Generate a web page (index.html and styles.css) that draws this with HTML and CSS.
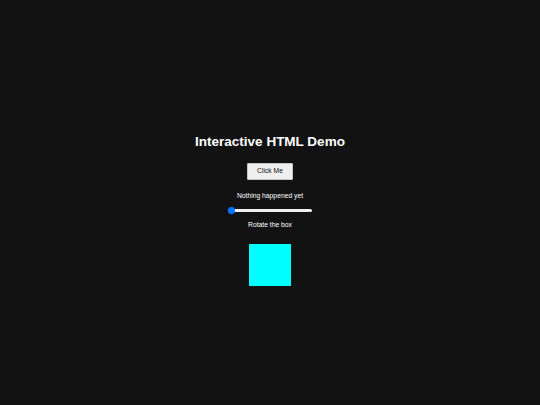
FILE: index.html
```html
<!DOCTYPE html>
<html lang="en">
<head>
<meta charset="utf-8">
<title>Interactive HTML Demo</title>
<link rel="stylesheet" href="styles.css">
</head>
<body>
<main class="demo">
  <h1 class="title">Interactive HTML Demo</h1>
  <button class="btn" type="button">Click Me</button>
  <p class="status">Nothing happened yet</p>
  <input class="slider" type="range" min="0" max="360" value="0">
  <p class="label">Rotate the box</p>
  <div class="box"></div>
</main>
</body>
</html>
```

FILE: styles.css
```css
html, body {
  margin: 0;
  padding: 0;
  height: 100%;
  background: #121212;
}

body {
  font-family: "Liberation Sans", Arial, sans-serif;
  color: #ffffff;
}

.demo {
  display: flex;
  flex-direction: column;
  align-items: center;
  padding-top: 134px;
}

.title {
  margin: 0;
  font-size: 13.5px;
  line-height: 16px;
  font-weight: bold;
}

.btn {
  margin-top: 12.7px;
  height: 17.8px;
  box-sizing: border-box;
  padding: 0 8.6px;
  font-family: "Liberation Sans", Arial, sans-serif;
  font-size: 6.75px;
  line-height: 1;
  color: #111111;
  background: #efefef;
  border: 0.84px solid #c4c4c4;
  border-radius: 1px;
}

.status,
.label {
  margin: 0;
  font-size: 6.75px;
  line-height: 8px;
}

.status {
  margin-top: 11.2px;
}

.slider {
  -webkit-appearance: none;
  appearance: none;
  margin: 7.5px 0 0;
  width: 84px;
  height: 7px;
  background: transparent;
}

.slider::-webkit-slider-runnable-track {
  height: 2.5px;
  background: #efefef;
  border-radius: 2px;
}

.slider::-webkit-slider-thumb {
  -webkit-appearance: none;
  appearance: none;
  width: 6.75px;
  height: 6.75px;
  margin-top: -2.1px;
  border-radius: 50%;
  background: #0075ff;
  border: none;
}

.label {
  margin-top: 7.3px;
}

.box {
  margin-top: 14.8px;
  width: 42px;
  height: 42px;
  background: #00ffff;
}
```
